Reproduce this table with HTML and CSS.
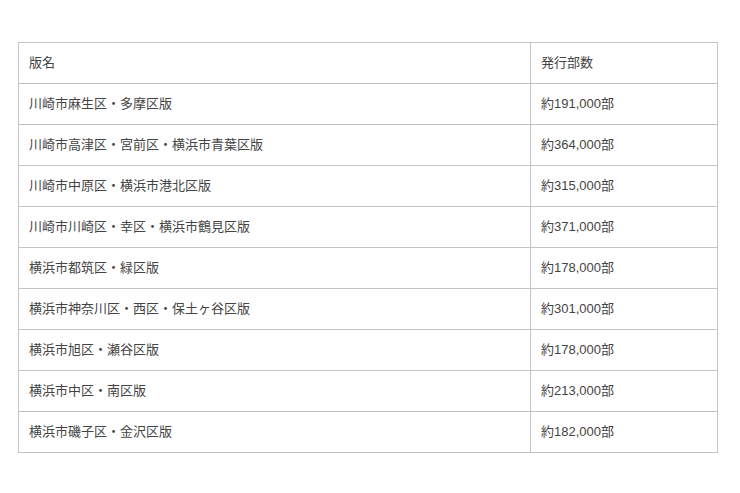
FILE: index.html
```html
<!DOCTYPE html>
<html lang="ja">
<head>
<meta charset="utf-8">
<link rel="stylesheet" href="styles.css">
</head>
<body>
<table class="editions">
  <tr><td class="name">版名</td><td class="count">発行部数</td></tr>
  <tr><td class="name">川崎市麻生区・多摩区版</td><td class="count">約191,000部</td></tr>
  <tr><td class="name">川崎市高津区・宮前区・横浜市青葉区版</td><td class="count">約364,000部</td></tr>
  <tr><td class="name">川崎市中原区・横浜市港北区版</td><td class="count">約315,000部</td></tr>
  <tr><td class="name">川崎市川崎区・幸区・横浜市鶴見区版</td><td class="count">約371,000部</td></tr>
  <tr><td class="name">横浜市都筑区・緑区版</td><td class="count">約178,000部</td></tr>
  <tr><td class="name">横浜市神奈川区・西区・保土ヶ谷区版</td><td class="count">約301,000部</td></tr>
  <tr><td class="name">横浜市旭区・瀬谷区版</td><td class="count">約178,000部</td></tr>
  <tr><td class="name">横浜市中区・南区版</td><td class="count">約213,000部</td></tr>
  <tr><td class="name">横浜市磯子区・金沢区版</td><td class="count">約182,000部</td></tr>
</table>
</body>
</html>
```
FILE: styles.css
```css
html, body {
  margin: 0;
  background: #ffffff;
}
body {
  padding: 42px 0 0 18px;
  font-family: "Liberation Sans", "Noto Sans CJK JP", sans-serif;
  font-size: 13px;
  color: #444444;
}
.editions {
  border-collapse: collapse;
  width: 700px;
  table-layout: fixed;
}
.editions td {
  border: 1px solid #c4c4c4;
  height: 40px;
  padding: 0 10px;
  box-sizing: border-box;
  vertical-align: middle;
  line-height: 18px;
}
.editions .name {
  width: 512px;
}
.editions tr td {
  height: 41px;
}
```
